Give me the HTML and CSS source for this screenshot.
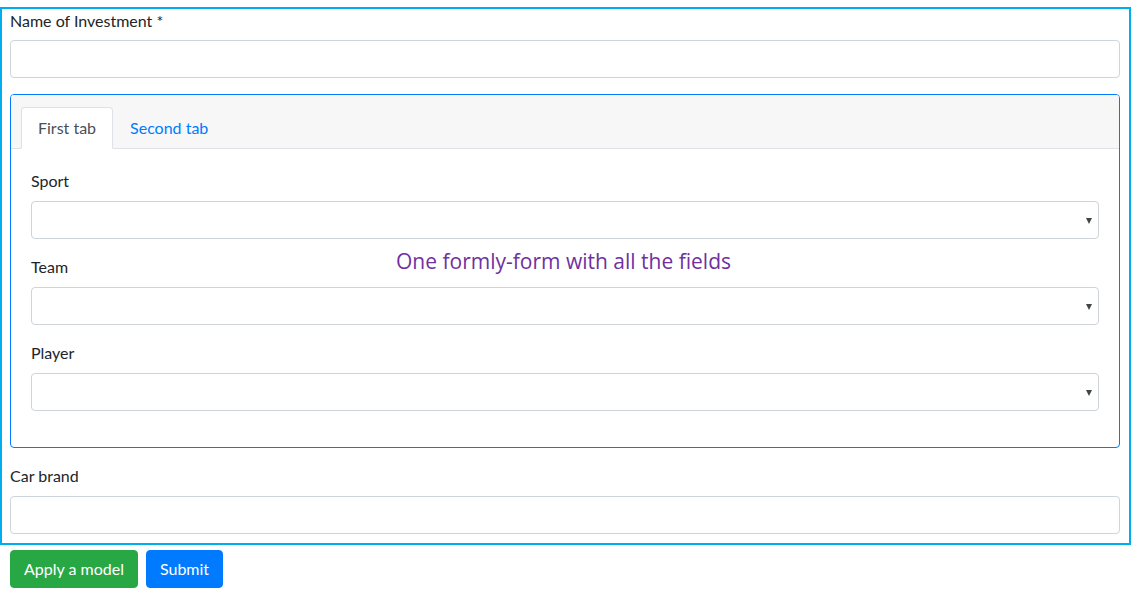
FILE: index.html
```html
<!DOCTYPE html>
<html>
<head>
<meta charset="utf-8">
<link rel="stylesheet" href="styles.css">
</head>
<body>
<div class="frame">
  <div class="group first">
    <label class="label">Name of Investment *</label>
    <input class="control" type="text">
  </div>
  <div class="card">
    <div class="card-header">
      <ul class="tabs">
        <li class="tab active">First tab</li>
        <li class="tab">Second tab</li>
      </ul>
    </div>
    <div class="card-body">
      <div class="group">
        <label class="label">Sport</label>
        <div class="select"></div>
      </div>
      <div class="group">
        <label class="label">Team</label>
        <div class="select"></div>
      </div>
      <div class="group">
        <label class="label">Player</label>
        <div class="select"></div>
      </div>
    </div>
  </div>
  <div class="group last">
    <label class="label">Car brand</label>
    <input class="control" type="text">
  </div>
  <div class="note">One formly-form with all the fields</div>
</div>
<div class="actions">
  <button class="btn btn-green">Apply a model</button>
  <button class="btn btn-blue">Submit</button>
</div>
</body>
</html>
```
FILE: styles.css
```css
* { box-sizing: border-box; }
body {
  margin: 0;
  padding-top: 7px;
  font-family: "Segoe UI", "Lato", "Liberation Sans", sans-serif;
  font-size: 16px;
  line-height: 24px;
  color: #212529;
  background: #fff;
}
.frame {
  position: relative;
  width: 1131px;
  border: 2px solid #00aeef;
  padding: 0 9px 9px 8px;
}
.group { margin-bottom: 16px; }
.group.last { margin-bottom: 0; }
.label {
  display: block;
  margin-bottom: 8px;
  height: 24px;
}
.group.first .label {
  height: 23px;
}
.control, .select {
  display: block;
  width: 100%;
  height: 38px;
  border: 1px solid #ced4da;
  border-radius: 4px;
  background: #fff;
  font: inherit;
  margin: 0;
  padding: 6px 12px;
}
.select { position: relative; }
.select::after {
  content: "";
  position: absolute;
  right: 6px;
  top: 16px;
  border-left: 3.5px solid transparent;
  border-right: 3.5px solid transparent;
  border-top: 6px solid #444;
}
.card {
  border: 1px solid #007bff;
  border-radius: 4px;
  margin-bottom: 16px;
}
.card-header {
  background: #f7f7f7;
  border-bottom: 1px solid #dee2e6;
  padding: 12px 10px 0;
  border-radius: 3px 3px 0 0;
  height: 54px;
}
.tabs {
  list-style: none;
  margin: 0;
  padding: 0;
  display: flex;
}
.tab {
  padding: 8px 16px;
  border: 1px solid transparent;
  border-radius: 4px 4px 0 0;
  color: #007bff;
  height: 42px;
}
.tab.active {
  background: #fff;
  border-color: #dee2e6 #dee2e6 #fff;
  color: #495057;
}
.card-body {
  padding: 20px;
}
.note {
  position: absolute;
  left: 394px;
  top: 237px;
  color: #7030a0;
  font-size: 21px;
  line-height: 30px;
  font-family: "Segoe UI", "Open Sans", "Liberation Sans", sans-serif;
}
.actions {
  display: flex;
  gap: 8px;
  padding: 5px 0 0 10px;
}
.btn {
  font: inherit;
  height: 38px;
  padding: 6px 13px;
  border: 1px solid transparent;
  border-radius: 4px;
  color: #fff;
}
.btn-green { background: #28a745; border-color: #28a745; }
.btn-blue { background: #007bff; border-color: #007bff; }
```
